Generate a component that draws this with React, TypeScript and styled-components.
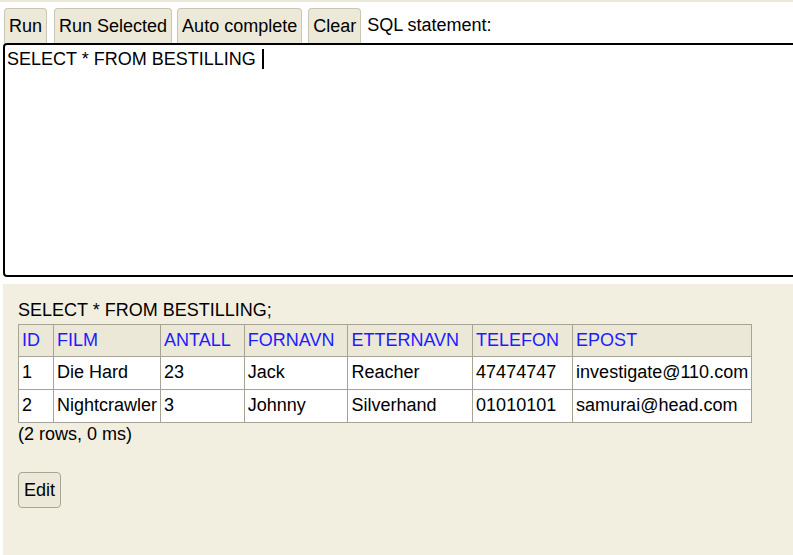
import React from "react";
import styled, { createGlobalStyle } from "styled-components";

const GlobalStyle = createGlobalStyle`
  html, body {
    margin: 0;
    padding: 0;
    overflow: hidden;
    background: #ffffff;
    font-family: "Liberation Sans", Arial, sans-serif;
    font-size: 18px;
    color: #000;
  }
`;

const Page = styled.div`
  display: flex;
  flex-direction: column;
  height: 100vh;
`;

const TopStrip = styled.div`
  height: 2px;
  background: #ede9da;
  flex: none;
`;

const Toolbar = styled.div`
  display: flex;
  align-items: flex-end;
  padding: 6px 0 0 4px;
  flex: none;
`;

const TabButton = styled.button<{ $gap: number }>`
  height: 35px;
  margin-right: ${(p) => p.$gap}px;
  padding: 0 4px;
  border: 1px solid #cbc6b3;
  border-bottom: none;
  border-radius: 4px 4px 0 0;
  background: #ece9d8;
  font-family: "Liberation Sans", Arial, sans-serif;
  font-size: 18px;
  color: #000;
  line-height: 21px;
`;

const Label = styled.span`
  height: 35px;
  line-height: 35px;
  font-size: 18px;
  white-space: nowrap;
`;

const Editor = styled.div`
  flex: none;
  box-sizing: border-box;
  margin-left: 3px;
  width: calc(100vw + 20px);
  height: 234px;
  border: 2px solid #000;
  border-radius: 4px;
  padding: 4px 2px;
  font-size: 18px;
  line-height: 21px;
  white-space: pre;
  background: #fff;
`;

const Caret = styled.span`
  display: inline-block;
  width: 2px;
  height: 20px;
  margin-left: 1px;
  background: #000;
  vertical-align: -4px;
`;

const ResultPanel = styled.div`
  flex: 1;
  box-sizing: border-box;
  margin: 7px 0 0 3px;
  width: calc(100vw + 20px);
  background: #f3efe0;
  padding: 16px 15px;
`;

const Statement = styled.div`
  line-height: 21px;
  margin-bottom: 3px;
`;

const Table = styled.table`
  border-collapse: collapse;
  border: 1px solid #a8a495;
`;

const Th = styled.th`
  background: #ece8d8;
  color: #1c1cff;
  font-weight: normal;
  text-align: left;
  border: 1px solid #a8a495;
  padding: 5px 13px 5px 3px;
  line-height: 21px;
  white-space: nowrap;
`;

const Td = styled.td`
  background: #ffffff;
  border: 1px solid #a8a495;
  padding: 5px 3px 6px 3px;
  line-height: 21px;
  white-space: nowrap;
`;

const Stats = styled.div`
  margin-top: 1px;
  line-height: 21px;
`;

const EditButton = styled.button`
  margin-top: 27px;
  height: 36px;
  padding: 0 5px;
  border: 1px solid #a9a594;
  border-radius: 4px;
  background: #ece9d8;
  font-family: "Liberation Sans", Arial, sans-serif;
  font-size: 18px;
  color: #000;
`;

const columns = ["ID", "FILM", "ANTALL", "FORNAVN", "ETTERNAVN", "TELEFON", "EPOST"];
const rows = [
  ["1", "Die Hard", "23", "Jack", "Reacher", "47474747", "investigate@110.com"],
  ["2", "Nightcrawler", "3", "Johnny", "Silverhand", "01010101", "samurai@head.com"],
];

export default function App() {
  return (
    <Page>
      <GlobalStyle />
      <TopStrip />
      <Toolbar>
        <TabButton $gap={7}>Run</TabButton>
        <TabButton $gap={5}>Run Selected</TabButton>
        <TabButton $gap={6}>Auto complete</TabButton>
        <TabButton $gap={6}>Clear</TabButton>
        <Label>SQL statement:</Label>
      </Toolbar>
      <Editor>
        SELECT * FROM BESTILLING <Caret />
      </Editor>
      <ResultPanel>
        <Statement>SELECT * FROM BESTILLING;</Statement>
        <Table>
          <thead>
            <tr>
              {columns.map((c) => (
                <Th key={c}>{c}</Th>
              ))}
            </tr>
          </thead>
          <tbody>
            {rows.map((r) => (
              <tr key={r[0]}>
                {r.map((v, i) => (
                  <Td key={i}>{v}</Td>
                ))}
              </tr>
            ))}
          </tbody>
        </Table>
        <Stats>(2 rows, 0 ms)</Stats>
        <EditButton>Edit</EditButton>
      </ResultPanel>
    </Page>
  );
}
